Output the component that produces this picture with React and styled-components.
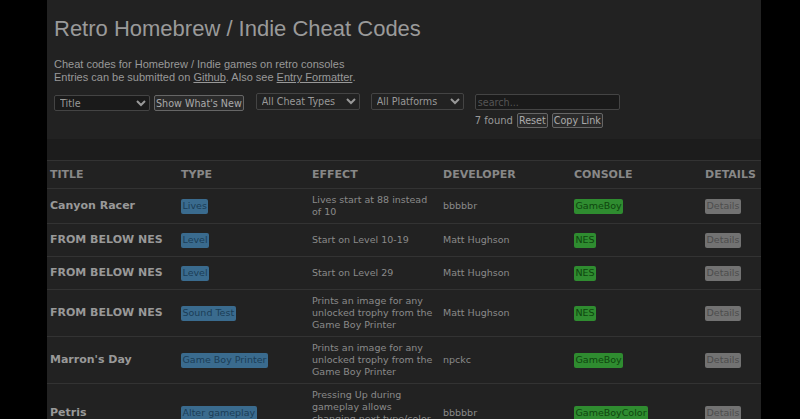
import React from 'react';
import styled, { createGlobalStyle } from 'styled-components';

const GlobalStyle = createGlobalStyle`
  html, body {
    margin: 0;
    padding: 0;
    background: #000;
  }
  body {
    font-family: "DejaVu Sans", Verdana, sans-serif;
    color: #999;
  }
`;

const Page = styled.div`
  width: 714px;
  margin-left: 47px;
  background: #222;
  overflow: hidden;
`;

const Header = styled.header`
  padding: 16px 7px 11px;
  background: #222;
`;

const Title = styled.h1`
  margin: 0 0 17px;
  font-family: "Liberation Sans", Arial, sans-serif;
  font-weight: normal;
  font-size: 22px;
  line-height: 25px;
  color: #9a9a9a;
`;

const Intro = styled.p`
  margin: 0 0 9px;
  font-family: "Liberation Sans", Arial, sans-serif;
  font-size: 11px;
  line-height: 13px;
  color: #999;

  a {
    color: #999;
  }
`;

const Controls = styled.div`
  display: flex;
  align-items: flex-start;
  gap: 11px;
`;

const Group = styled.div`
  display: flex;
  align-items: center;
  gap: 4px;
  margin-top: ${(p) => p.$top || 0}px;
  margin-right: ${(p) => p.$right || 0}px;
`;

const Stack = styled.div`
  display: flex;
  flex-direction: column;
  gap: 3px;
  margin-top: 1px;
`;

const Select = styled.select`
  width: ${(p) => p.$w}px;
  height: ${(p) => p.$h || 17}px;
  padding: 0 0 0 1px;
  font-family: "DejaVu Sans", sans-serif;
  font-size: 9.6px;
  color: #999;
  background: ${(p) => (p.$dark ? '#1a1a1a' : '#222')};
  border: 1px solid #444;
  border-radius: 2px;
  color-scheme: dark;
`;

const Button = styled.button`
  height: ${(p) => p.$h || 15}px;
  padding: 0 1px;
  font-family: "DejaVu Sans", sans-serif;
  font-size: 9.6px;
  line-height: 13px;
  color: #aaa;
  background: #2a2a2a;
  border: 1px solid #666;
  border-radius: 2px;
`;

const Search = styled.input`
  width: 145px;
  height: 16px;
  box-sizing: border-box;
  padding: 0 2px;
  font-family: "DejaVu Sans", sans-serif;
  font-size: 9.6px;
  color: #999;
  background: #1a1a1a;
  border: 1px solid #444;
  border-radius: 2px;

  &::placeholder {
    color: #555;
  }
`;

const Found = styled.span`
  font-size: 10px;
  color: #999;
`;

const Band = styled.div`
  height: 21px;
  background: #1c1c1c;
`;

const Table = styled.table`
  table-layout: fixed;
  width: 786px;
  border-collapse: collapse;
`;

const Th = styled.th`
  width: 125px;
  height: 27px;
  padding: 0 3px;
  text-align: left;
  font-size: 11px;
  font-weight: bold;
  color: #888;
  border-top: 1px solid #333;
`;

const Tr = styled.tr`
  border-top: 1px solid #333;
`;

const Td = styled.td`
  padding: 5px 3px;
  height: 22px;
  font-size: 9.5px;
  line-height: 12px;
  color: #8a8a8a;
  vertical-align: middle;
`;

const Name = styled(Td)`
  font-size: 11px;
  font-weight: bold;
  color: #999;
`;

const Pill = styled.span`
  display: inline-block;
  padding: 1.5px 1.5px;
  border-radius: 2px;
  font-size: 9.5px;
  line-height: 12px;
  background: ${(p) => (p.$kind === 'console' ? '#2f8c30' : '#3a6b8e')};
  color: ${(p) => (p.$kind === 'console' ? '#0e450e' : '#1a3d56')};
`;

const DetailsButton = styled.span`
  display: inline-block;
  padding: 1.5px 1.5px;
  border-radius: 2px;
  font-size: 9.5px;
  line-height: 12px;
  background: #727272;
  color: #4d4d4d;
`;

const rows = [
  { title: 'Canyon Racer', type: 'Lives', effect: 'Lives start at 88 instead of 10', dev: 'bbbbbr', console: 'GameBoy' },
  { title: 'FROM BELOW NES', type: 'Level', effect: 'Start on Level 10-19', dev: 'Matt Hughson', console: 'NES' },
  { title: 'FROM BELOW NES', type: 'Level', effect: 'Start on Level 29', dev: 'Matt Hughson', console: 'NES' },
  { title: 'FROM BELOW NES', type: 'Sound Test', effect: 'Prints an image for any unlocked trophy from the Game Boy Printer', dev: 'Matt Hughson', console: 'NES' },
  { title: "Marron's Day", type: 'Game Boy Printer', effect: 'Prints an image for any unlocked trophy from the Game Boy Printer', dev: 'npckc', console: 'GameBoy' },
  { title: 'Petris', type: 'Alter gameplay', effect: 'Pressing Up during gameplay allows changing next type/color of the falling piece', dev: 'bbbbbr', console: 'GameBoyColor' },
];

const App = () => (
  <>
    <GlobalStyle />
    <Page>
      <Header>
        <Title>Retro Homebrew / Indie Cheat Codes</Title>
        <Intro>
          Cheat codes for Homebrew / Indie games on retro consoles
          <br />
          Entries can be submitted on <a href="#">Github</a>. Also see <a href="#">Entry Formatter</a>.
        </Intro>
        <Controls>
          <Group $top={2} $right={1}>
            <Select $w={96} $h={16} $dark>
              <option>Title</option>
            </Select>
            <Button $h={16}>Show What's New</Button>
          </Group>
          <Group>
            <Select $w={104}>
              <option>All Cheat Types</option>
            </Select>
          </Group>
          <Group>
            <Select $w={93}>
              <option>All Platforms</option>
            </Select>
          </Group>
          <Stack>
            <Search placeholder="search..." />
            <Group>
              <Found>7 found</Found>
              <Button>Reset</Button>
              <Button>Copy Link</Button>
            </Group>
          </Stack>
        </Controls>
      </Header>
      <Band />
      <Table>
        <thead>
          <tr>
            <Th>TITLE</Th>
            <Th>TYPE</Th>
            <Th>EFFECT</Th>
            <Th>DEVELOPER</Th>
            <Th>CONSOLE</Th>
            <Th>DETAILS</Th>
          </tr>
        </thead>
        <tbody>
          {rows.map((r, i) => (
            <Tr key={i}>
              <Name>{r.title}</Name>
              <Td><Pill>{r.type}</Pill></Td>
              <Td>{r.effect}</Td>
              <Td>{r.dev}</Td>
              <Td><Pill $kind="console">{r.console}</Pill></Td>
              <Td><DetailsButton>Details</DetailsButton></Td>
            </Tr>
          ))}
        </tbody>
      </Table>
    </Page>
  </>
);

export default App;
